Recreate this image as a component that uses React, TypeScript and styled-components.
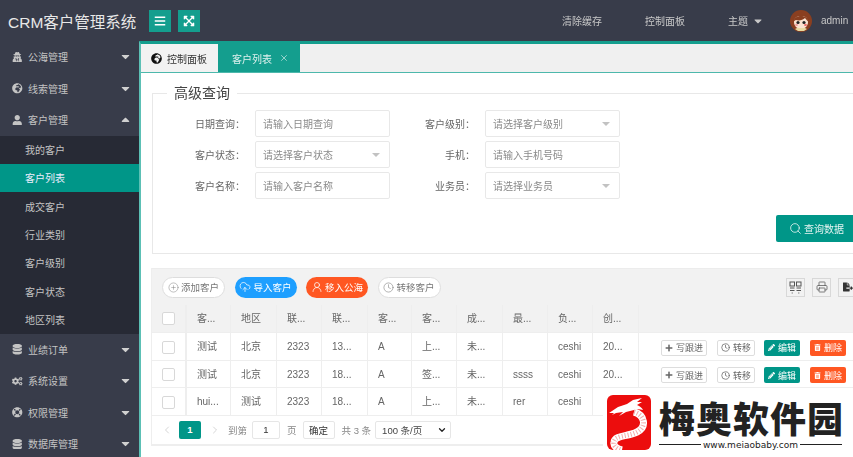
import React from "react";
import styled, { createGlobalStyle } from "styled-components";
import { FaBars, FaExpandArrowsAlt, FaUserSecret, FaGlobeAfrica, FaUser, FaDatabase, FaCogs, FaLifeRing, FaCaretDown, FaCaretUp, FaPencilAlt, FaTrashAlt, FaPlus, FaFileExport } from "react-icons/fa";
import { CirclePlus, CloudUpload, UserRound, Clock, Printer, Search, X, ChevronLeft, ChevronRight, ChevronDown } from "lucide-react";

const FONT = `"Liberation Sans", "Noto Sans CJK SC", sans-serif`;
const TEAL = "#009688";
const ORANGE = "#ff5722";

const Global = createGlobalStyle`
  html, body { margin: 0; padding: 0; overflow: hidden; background: #fff; }
  * { box-sizing: border-box; }
  #root { font-family: ${FONT}; }
`;

const Page = styled.div`
  position: relative;
  width: 853px;
  height: 457px;
  overflow: hidden;
  background: #fff;
  font-size: 10px;
`;
const Screen = styled.div`
  width: 853px;
  height: 457px;
  display: flex;
  flex-direction: column;
  filter: blur(0.35px);
`;

const Header = styled.header`
  flex: none;
  height: 41px;
  display: flex;
  align-items: center;
  background: #383c4a;
  color: #c8c8c8;
  white-space: nowrap;
`;
const Brand = styled.div`
  width: 149px;
  padding-left: 8px;
  font-size: 15.5px;
  color: #e8e8e8;
  flex: none;
`;
const HeaderButton = styled.button`
  flex: none;
  width: 22px;
  height: 22px;
  margin-right: 7px;
  border: 0;
  padding: 0;
  display: flex;
  align-items: center;
  justify-content: center;
  background: #149e8e;
  color: #fff;
  font-size: 12px;
`;
const HeaderLinks = styled.nav`
  flex: none;
  margin-left: 355px;
  display: flex;
  align-items: center;
`;
const HeaderLink = styled.span`
  flex: none;
  width: 83px;
  display: flex;
  align-items: center;
  gap: 4px;
  font-size: 10px;
`;
const AdminName = styled.span`
  margin-left: 9px;
  margin-right: 3px;
  font-size: 10px;
`;
const AvatarSvg = styled.svg`
  flex: none;
  margin-left: -21px;
`;

const Body = styled.div`
  flex: 1;
  min-height: 0;
  display: flex;
`;
const Sidebar = styled.aside`
  flex: none;
  width: 139px;
  background: #383c4a;
  color: #c4c4c4;
`;
const MenuRow = styled.div`
  height: 31.5px;
  display: flex;
  align-items: center;
  padding: 0 7px 0 12px;
  font-size: 10px;
  white-space: nowrap;
  svg { flex: none; }
`;
const MenuIcon = styled.span`
  width: 16px;
  display: flex;
  align-items: center;
  font-size: 10.5px;
`;
const MenuText = styled.span`
  flex: 1;
`;
const MenuCaret = styled.span`
  display: flex;
  font-size: 13px;
  color: #d0d0d0;
`;
const SubMenu = styled.div`
  height: 198px;
  background: #272a35;
  display: flex;
  flex-direction: column;
`;
const SubItem = styled.div<{ $active?: boolean }>`
  flex: 1;
  display: flex;
  align-items: center;
  padding-left: 25px;
  font-size: 10px;
  background: ${(p) => (p.$active ? TEAL : "transparent")};
  color: ${(p) => (p.$active ? "#eef" : "#c4c4c4")};
`;

const Main = styled.main`
  flex: none;
  width: 731px;
  border-top: 3px solid #149e8e;
  border-left: 2px solid #5cc0b5;
`;
const Tabs = styled.div`
  height: 29px;
  display: flex;
  background: #f0f0f0;
  border-bottom: 1px solid #4db8ac;
`;
const Tab = styled.div<{ $active?: boolean }>`
  height: 28px;
  display: flex;
  align-items: center;
  font-size: 10px;
  width: ${(p) => (p.$active ? "82px" : "77px")};
  padding-left: ${(p) => (p.$active ? "14px" : "10px")};
  background: ${(p) => (p.$active ? "#149e8e" : "#f2f2f2")};
  color: ${(p) => (p.$active ? "#e0f2ef" : "#333")};
  gap: ${(p) => (p.$active ? "7px" : "5px")};
`;

const Fieldset = styled.fieldset`
  margin: 10px 0 14px 11px;
  padding: 7px 13px 11px 12px;
  width: 719px;
  border: 1px solid #e8e8e8;
  min-inline-size: 0;
`;
const Legend = styled.legend`
  margin-left: 2px;
  padding: 0 7px;
  font-size: 14px;
  line-height: 20px;
  color: #444;
`;
const FormGrid = styled.div`
  display: grid;
  grid-template-columns: 90px 135px 95px 135px;
  grid-auto-rows: 27px;
  row-gap: 4px;
`;
const FieldLabel = styled.label`
  display: flex;
  align-items: center;
  justify-content: flex-end;
  padding-right: 10px;
  font-size: 10px;
  color: #666;
`;
const Field = styled.div`
  display: flex;
  align-items: center;
  justify-content: space-between;
  padding: 0 9px 0 7px;
  border: 1px solid #e8e8e8;
  border-radius: 2px;
  color: #8a8a8a;
  font-size: 10px;
`;
const Arrow = styled.span`
  width: 0;
  height: 0;
  border-left: 4px solid transparent;
  border-right: 4px solid transparent;
  border-top: 4px solid #c2c2c2;
`;
const QueryRow = styled.div`
  display: flex;
  justify-content: flex-end;
  margin-top: 16px;
`;
const QueryButton = styled.button`
  width: 81px;
  height: 27px;
  border: 0;
  border-radius: 2px;
  padding: 0 0 0 13px;
  display: flex;
  align-items: center;
  gap: 2px;
  background: ${TEAL};
  color: #e6f4f2;
  font: 10px ${FONT};
`;

const TablePanel = styled.section`
  margin-left: 10px;
  width: 719px;
  border-left: 1px solid #eee;
  border-bottom: 2px solid #eee;
`;
const Toolbar = styled.div`
  height: 37px;
  display: flex;
  align-items: center;
  gap: 9.5px;
  padding: 0 13px 0 10px;
  background: #f2f2f2;
  border-top: 1px solid #ececec;
`;
const Pill = styled.button<{ $bg?: string }>`
  height: 21px;
  width: ${(p) => (p.$bg ? "62px" : "63px")};
  border-radius: 11px;
  padding: 0;
  display: flex;
  align-items: center;
  justify-content: center;
  gap: 2px;
  font: 9.5px ${FONT};
  border: ${(p) => (p.$bg ? "0" : "1px solid #ddd")};
  background: ${(p) => p.$bg ?? "#fff"};
  color: ${(p) => (p.$bg ? "#fff" : "#777")};
`;
const ToolIcons = styled.div`
  margin-left: auto;
  display: flex;
  gap: 7px;
`;
const ToolIcon = styled.span`
  width: 19px;
  height: 19px;
  display: flex;
  align-items: center;
  justify-content: center;
  border: 1px solid #d8d8d8;
  color: #555;
`;
const Row = styled.div<{ $head?: boolean }>`
  height: ${(p) => (p.$head ? "28px" : "27.6px")};
  display: grid;
  grid-template-columns: 35px 44px 46px 45px 46px 44px 45px 46px 45px 45px 46px 1fr;
  background: ${(p) => (p.$head ? "#f2f2f2" : "#fff")};
  border-bottom: 1px solid #eee;
`;
const Cell = styled.div<{ $head?: boolean }>`
  min-width: 0;
  padding-left: 10px;
  line-height: ${(p) => (p.$head ? "27px" : "28px")};
  font-size: 10px;
  color: #666;
  white-space: nowrap;
  border-right: 1px solid #eee;
`;
const CheckCell = styled.div`
  display: flex;
  align-items: center;
  justify-content: center;
  border-right: 2px solid #eee;
`;
const CheckBox = styled.span`
  width: 13px;
  height: 13px;
  background: #fff;
  border: 1px solid #d8d8d8;
  border-radius: 2px;
`;
const Actions = styled.div`
  display: flex;
  align-items: center;
  padding: 1px 0 0 22px;
`;
const ActionButton = styled.button<{ $bg?: string; $width: number; $gap: number }>`
  flex: none;
  width: ${(p) => p.$width}px;
  margin-right: ${(p) => p.$gap}px;
  height: 16px;
  padding: 0;
  border-radius: 2px;
  display: flex;
  align-items: center;
  justify-content: center;
  gap: 3px;
  font: 9px ${FONT};
  border: ${(p) => (p.$bg ? "0" : "1px solid #ddd")};
  background: ${(p) => p.$bg ?? "#fff"};
  color: ${(p) => (p.$bg ? "#fff" : "#666")};
`;

const Pager = styled.div`
  height: 28px;
  display: flex;
  align-items: center;
  padding-left: 9px;
  font-size: 9.5px;
  color: #888;
`;
const PagerCurrent = styled.span`
  width: 22px;
  height: 18px;
  margin: 0 8px 0 6px;
  display: flex;
  align-items: center;
  justify-content: center;
  border-radius: 2px;
  background: ${TEAL};
  color: #fff;
  font-weight: bold;
`;
const PagerBox = styled.span<{ $width: number }>`
  flex: none;
  width: ${(p) => p.$width}px;
  height: 18px;
  display: flex;
  align-items: center;
  justify-content: center;
  border: 1px solid #e6e6e6;
  border-radius: 2px;
  color: #333;
  background: #fff;
`;
const PagerText = styled.span<{ $left: number; $right: number }>`
  margin-left: ${(p) => p.$left}px;
  margin-right: ${(p) => p.$right}px;
`;
const PagerSelect = styled(PagerBox)`
  justify-content: space-between;
  padding: 0 3px 0 6px;
  color: #444;
`;

const Watermark = styled.div`
  position: absolute;
  left: 603px;
  top: 388px;
  width: 250px;
  height: 69px;
  background: #fff;
  display: flex;
  align-items: center;
  padding-left: 4px;
  gap: 8px;
`;
const WatermarkText = styled.div`
  display: flex;
  flex-direction: column;
  width: 183px;
`;
const WatermarkTitle = styled.div`
  font-size: 36px;
  line-height: 44px;
  font-weight: 900;
  font-family: "Noto Sans CJK SC", sans-serif;
  color: #222;
  letter-spacing: 1px;
  white-space: nowrap;
`;
const WatermarkUrl = styled.div`
  display: flex;
  align-items: center;
  gap: 2px;
  font: 9px/12px "DejaVu Sans", sans-serif;
  color: #222;
  white-space: nowrap;
  &::before, &::after {
    content: "";
    flex: 1;
    height: 1.5px;
    background: #222;
  }
`;

const Avatar = () => (
  <AvatarSvg width="22" height="22" viewBox="0 0 22 22">
    <circle cx="11" cy="11" r="11" fill="#8a3f20" />
    <path d="M4 12c0-4 3-6 7-6s7 2 7 6c0 4-3 7-7 7s-7-3-7-7z" fill="#fbe3d0" />
    <path d="M3 12c1-4 4-6 8-6s7 2 8 6c-2-1-3-3-4-4-2 2-6 3-9 2-1 0-2 1-3 2z" fill="#8a3f20" />
    <circle cx="8" cy="12.5" r="1.6" fill="#222" />
    <circle cx="14" cy="12.5" r="1.6" fill="#222" />
    <ellipse cx="6.5" cy="15" rx="1.5" ry="1" fill="#f29a9a" />
    <ellipse cx="15.5" cy="15" rx="1.5" ry="1" fill="#e66" />
    <path d="M5 19l3 2h6l3-2-2-1H7z" fill="#e8d9a0" />
  </AvatarSvg>
);

const ColumnsIcon = () => (
  <svg width="13" height="13" viewBox="0 0 13 13" fill="none" stroke="currentColor" strokeWidth="1">
    <rect x="1" y="1" width="4.5" height="4" />
    <rect x="7.5" y="1" width="4.5" height="4" />
    <path d="M1 7h4.5M7.5 7h4.5M1 9.5h4.5M7.5 9.5h4.5M3.2 11.5v1M9.8 11.5v1" />
  </svg>
);

const DragonLogo = () => (
  <svg width="44" height="55" viewBox="0 0 44 55" style={{ flex: "none" }}>
    <rect width="44" height="55" rx="6" fill="#ec0d0d" />
    <path d="M2 18l9-6 9-3 6-4 9-2-5 4 5 0-5 3c3 1 5 3 6 5-3-1-6-1-9 0l-8 2-7 4 4-4-7 1-4 2 2-2z" fill="#fff" />
    <path d="M27 17C38 20 40 32 30 37C20 42 8 40 7 47C6 51 10 54 15 55" fill="none" stroke="#fff" strokeWidth="7" />
    <path d="M27 17C38 20 40 32 30 37C20 42 8 40 7 47C6 51 10 54 15 55" fill="none" stroke="#f4a9a9" strokeWidth="5" strokeDasharray="1 2" />
  </svg>
);

const menuTop = [
  { icon: <FaUserSecret />, label: "公海管理" },
  { icon: <FaGlobeAfrica />, label: "线索管理" },
];
const subs = ["我的客户", "客户列表", "成交客户", "行业类别", "客户级别", "客户状态", "地区列表"];
const menuBottom = [
  { icon: <FaDatabase />, label: "业绩订单" },
  { icon: <FaCogs />, label: "系统设置" },
  { icon: <FaLifeRing />, label: "权限管理" },
  { icon: <FaDatabase />, label: "数据库管理" },
];
const heads = ["客...", "地区", "联...", "联...", "客...", "客...", "成...", "最...", "负...", "创..."];
const rows = [
  ["测试", "北京", "2323", "13...", "A", "上...", "未...", "", "ceshi", "20..."],
  ["测试", "北京", "2323", "18...", "A", "签...", "未...", "ssss", "ceshi", "20..."],
  ["hui...", "测试", "2323", "18...", "A", "上...", "未...", "rer", "ceshi", "20..."],
];

export default function App() {
  return (
    <Page>
      <Global />
      <Screen>
        <Header>
          <Brand>CRM客户管理系统</Brand>
          <HeaderButton><FaBars /></HeaderButton>
          <HeaderButton><FaExpandArrowsAlt /></HeaderButton>
          <HeaderLinks>
            <HeaderLink>清除缓存</HeaderLink>
            <HeaderLink>控制面板</HeaderLink>
            <HeaderLink>主题<FaCaretDown size={12} /></HeaderLink>
            <Avatar />
            <AdminName>admin</AdminName>
            <FaCaretDown size={12} />
          </HeaderLinks>
        </Header>
        <Body>
          <Sidebar>
            {menuTop.map((m) => (
              <MenuRow key={m.label}>
                <MenuIcon>{m.icon}</MenuIcon>
                <MenuText>{m.label}</MenuText>
                <MenuCaret><FaCaretDown /></MenuCaret>
              </MenuRow>
            ))}
            <MenuRow>
              <MenuIcon><FaUser /></MenuIcon>
              <MenuText>客户管理</MenuText>
              <MenuCaret><FaCaretUp /></MenuCaret>
            </MenuRow>
            <SubMenu>
              {subs.map((s) => (
                <SubItem key={s} $active={s === "客户列表"}>{s}</SubItem>
              ))}
            </SubMenu>
            {menuBottom.map((m) => (
              <MenuRow key={m.label}>
                <MenuIcon>{m.icon}</MenuIcon>
                <MenuText>{m.label}</MenuText>
                <MenuCaret><FaCaretDown /></MenuCaret>
              </MenuRow>
            ))}
          </Sidebar>
          <Main>
            <Tabs>
              <Tab><FaGlobeAfrica size={11} color="#111" />控制面板</Tab>
              <Tab $active>客户列表<X size={10} strokeWidth={1.5} /></Tab>
            </Tabs>
            <Fieldset>
              <Legend>高级查询</Legend>
              <FormGrid>
                <FieldLabel>日期查询：</FieldLabel>
                <Field>请输入日期查询</Field>
                <FieldLabel>客户级别：</FieldLabel>
                <Field>请选择客户级别<Arrow /></Field>
                <FieldLabel>客户状态：</FieldLabel>
                <Field>请选择客户状态<Arrow /></Field>
                <FieldLabel>手机：</FieldLabel>
                <Field>请输入手机号码</Field>
                <FieldLabel>客户名称：</FieldLabel>
                <Field>请输入客户名称</Field>
                <FieldLabel>业务员：</FieldLabel>
                <Field>请选择业务员<Arrow /></Field>
              </FormGrid>
              <QueryRow>
                <QueryButton><Search size={13} strokeWidth={1.5} />查询数据</QueryButton>
              </QueryRow>
            </Fieldset>
            <TablePanel>
              <Toolbar>
                <Pill><CirclePlus size={11} strokeWidth={1} />添加客户</Pill>
                <Pill $bg="#1e9fff"><CloudUpload size={12} strokeWidth={1.5} />导入客户</Pill>
                <Pill $bg={ORANGE}><UserRound size={12} strokeWidth={1.5} />移入公海</Pill>
                <Pill><Clock size={11} strokeWidth={1.2} />转移客户</Pill>
                <ToolIcons>
                  <ToolIcon><ColumnsIcon /></ToolIcon>
                  <ToolIcon><Printer size={12} strokeWidth={1.5} /></ToolIcon>
                  <ToolIcon><FaFileExport size={10} color="#333" /></ToolIcon>
                </ToolIcons>
              </Toolbar>
              <Row $head>
                <CheckCell><CheckBox /></CheckCell>
                {heads.map((h, i) => <Cell $head key={i}>{h}</Cell>)}
                <Actions />
              </Row>
              {rows.map((r, i) => (
                <Row key={i}>
                  <CheckCell><CheckBox /></CheckCell>
                  {r.map((c, j) => <Cell key={j}>{c}</Cell>)}
                  {i < 2 && (
                    <Actions>
                      <ActionButton $width={46} $gap={10}><FaPlus size={8} />写跟进</ActionButton>
                      <ActionButton $width={38} $gap={9}><Clock size={9} />转移</ActionButton>
                      <ActionButton $width={36} $gap={10} $bg={TEAL}><FaPencilAlt size={7} />编辑</ActionButton>
                      <ActionButton $width={36} $gap={0} $bg={ORANGE}><FaTrashAlt size={7} />删除</ActionButton>
                    </Actions>
                  )}
                </Row>
              ))}
              <Pager>
                <ChevronLeft size={12} color="#bbb" strokeWidth={1.2} />
                <PagerCurrent>1</PagerCurrent>
                <ChevronRight size={12} color="#bbb" strokeWidth={1.2} />
                <PagerText $left={7} $right={5}>到第</PagerText>
                <PagerBox $width={28}>1</PagerBox>
                <PagerText $left={7} $right={6}>页</PagerText>
                <PagerBox $width={32}>确定</PagerBox>
                <PagerText $left={7} $right={4}>共 3 条</PagerText>
                <PagerSelect $width={76}>100 条/页<ChevronDown size={10} strokeWidth={3} color="#222" /></PagerSelect>
              </Pager>
            </TablePanel>
          </Main>
        </Body>
      </Screen>
      <Watermark>
        <DragonLogo />
        <WatermarkText>
          <WatermarkTitle>梅奥软件园</WatermarkTitle>
          <WatermarkUrl>www.meiaobaby.com</WatermarkUrl>
        </WatermarkText>
      </Watermark>
    </Page>
  );
}
